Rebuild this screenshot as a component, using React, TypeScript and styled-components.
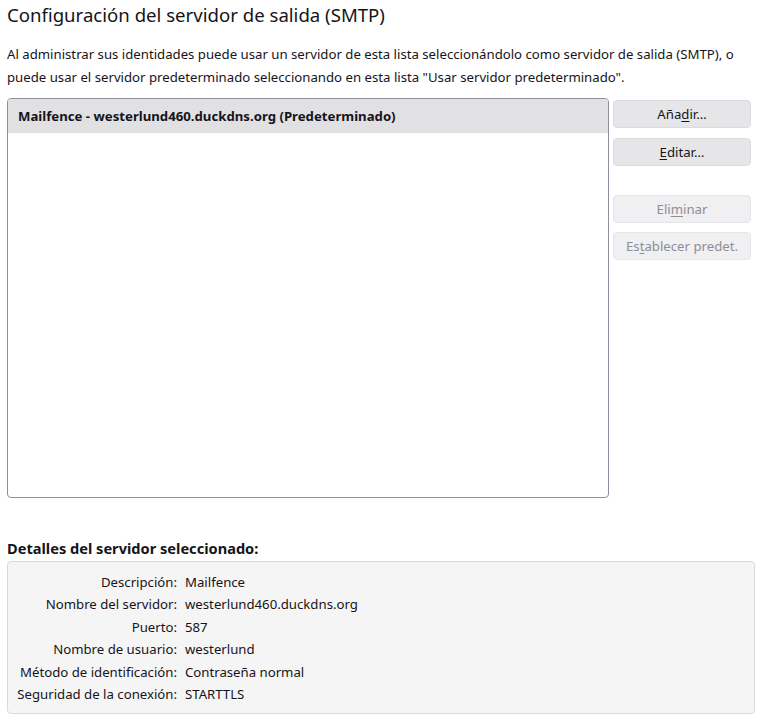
import React from 'react';
import styled, { createGlobalStyle } from 'styled-components';

const GlobalStyle = createGlobalStyle`
    html, body {
        margin: 0;
        padding: 0;
        background: #fff;
    }
    body {
        font-family: "Noto Sans", "Open Sans", sans-serif;
        font-size: 13.2px;
        color: #15141a;
    }
`

const Page = styled.div`
    padding: 0 6px 0 7px;
    display: flex;
    flex-direction: column;
`
const Title = styled.h1`
    margin: 0;
    padding-top: 2px;
    font-size: 18.6px;
    font-weight: 400;
    line-height: 26px;
`
const Intro = styled.p`
    margin: 15px 0 0 0;
    line-height: 23px;
    padding-right: 14px;
`
const ServerArea = styled.div`
    display: flex;
    gap: 4px;
    margin-top: 9px;
`
const ServerList = styled.div`
    width: 600px;
    height: 398px;
    border: 1px solid #8f8f9d;
    border-radius: 4px;
    overflow: hidden;
    flex-shrink: 0;
`
const ServerItem = styled.div<{ $selected?: boolean }>`
    height: 34px;
    display: flex;
    align-items: center;
    padding-left: 10px;
    font-weight: ${p => p.$selected ? 700 : 400};
    background: ${p => p.$selected ? '#e1e1e4' : 'transparent'};
`
const ButtonColumn = styled.div`
    display: flex;
    flex-direction: column;
    padding-top: 2px;
    width: 138px;
`
const Button = styled.button<{ $gapBefore?: number }>`
    height: 28px;
    margin-top: ${p => p.$gapBefore ?? 0}px;
    border: 1px solid ${p => p.disabled ? '#e6e6e8' : '#dcdce0'};
    border-radius: 4px;
    background: ${p => p.disabled ? '#f0f0f2' : '#e6e6e8'};
    color: ${p => p.disabled ? '#8e8e92' : '#15141a'};
    font-family: inherit;
    font-size: 13.2px;
    padding: 0;
    cursor: ${p => p.disabled ? 'default' : 'pointer'};

    &:hover:not(:disabled) {
        background: #d8d8dc;
    }
`
const AccessKey = styled.span`
    text-decoration: underline;
    text-underline-offset: 2px;
`
const DetailsHeading = styled.h2`
    margin: 40px 0 0 0;
    font-size: 14.6px;
    font-weight: 700;
    line-height: 20px;
`
const DetailsBox = styled.div`
    margin-top: 3px;
    border: 1px solid #d9d9dc;
    border-radius: 4px;
    background: #f5f5f5;
    padding: 9px 0 8px 0;
    display: grid;
    grid-template-columns: 169px 1fr;
    column-gap: 8px;
`
const DetailLabel = styled.div`
    text-align: right;
    line-height: 22.4px;
    white-space: nowrap;
`
const DetailValue = styled.div`
    line-height: 22.4px;
`

const details: [string, string][] = [
    ['Descripción:', 'Mailfence'],
    ['Nombre del servidor:', 'westerlund460.duckdns.org'],
    ['Puerto:', '587'],
    ['Nombre de usuario:', 'westerlund'],
    ['Método de identificación:', 'Contraseña normal'],
    ['Seguridad de la conexión:', 'STARTTLS'],
]

const label = (before: string, key: string, after: string) => (
    <>{before}<AccessKey>{key}</AccessKey>{after}</>
)

export default function App() {
    return <Page>
        <GlobalStyle />
        <Title>Configuración del servidor de salida (SMTP)</Title>
        <Intro>
            Al administrar sus identidades puede usar un servidor de esta lista seleccionándolo como servidor de salida (SMTP), o puede usar el servidor predeterminado seleccionando en esta lista "Usar servidor predeterminado".
        </Intro>
        <ServerArea>
            <ServerList>
                <ServerItem $selected>Mailfence - westerlund460.duckdns.org (Predeterminado)</ServerItem>
            </ServerList>
            <ButtonColumn>
                <Button>{label('Aña', 'd', 'ir…')}</Button>
                <Button $gapBefore={10}>{label('', 'E', 'ditar…')}</Button>
                <Button $gapBefore={29} disabled>{label('Eli', 'm', 'inar')}</Button>
                <Button $gapBefore={9} disabled>{label('Es', 't', 'ablecer predet.')}</Button>
            </ButtonColumn>
        </ServerArea>
        <DetailsHeading>Detalles del servidor seleccionado:</DetailsHeading>
        <DetailsBox>
            {details.map(([k, v]) => (
                <React.Fragment key={k}>
                    <DetailLabel>{k}</DetailLabel>
                    <DetailValue>{v}</DetailValue>
                </React.Fragment>
            ))}
        </DetailsBox>
    </Page>
}
